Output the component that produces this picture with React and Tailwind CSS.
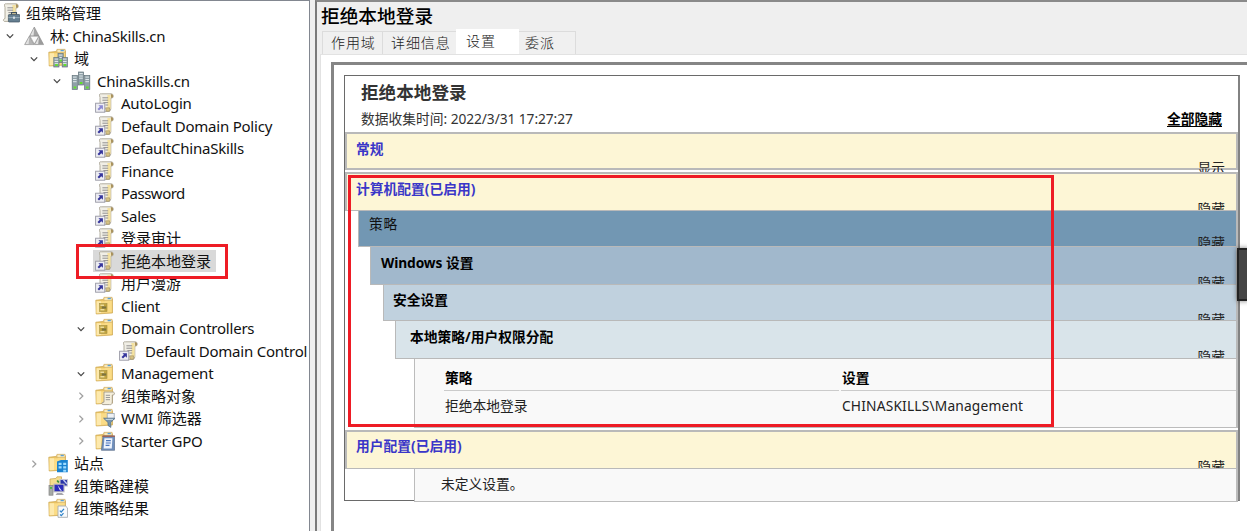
import React from "react";

const LATIN = "font-['Noto_Sans','Noto_Sans_CJK_SC',sans-serif]";

/* ---------- icon parts ---------- */
function FolderShape() {
  return (
    <g>
      <path d="M.8 4.2 L8 3.4 L9.5 1.8 H16.5 L17.5 3 V17 L1.2 18 Z" fill="#e9c263" stroke="#cda64f" strokeWidth=".7" />
      <rect x="9" y="1.2" width="8" height="3.4" fill="#f8e8b8" stroke="#cfa95c" strokeWidth=".6" />
      <rect x="12.6" y="1.8" width="3.2" height="1.4" fill="#5aa0d8" />
      <path d="M1.6 5.2 H9.6 L10.6 4.8 H16.8 V16.2 L1.6 17.3 Z" fill="#fbdc86" />
      <path d="M1.6 5.2 H6 V17 L1.6 17.3 Z" fill="#fde9ad" />
    </g>
  );
}
function ScrollShape() {
  return (
    <g>
      <path d="M4.5 2.2 C4.2 .8 5.6 .7 6.6 .8 H16.5 C18.6 .8 18.7 4.4 17.3 5 H15.8 V15.8 C15.8 18.6 13 18.8 12 18.4 H4.5 C3 18.2 3 15.8 5 15.6 V4.6 Z" fill="#f1efe6" stroke="#aaa595" strokeWidth=".9" />
      <path d="M12.4 2 H15.6 V16 H12.4Z" fill="#f6e3a0" />
      <path d="M15.8 1 C18.8 1 18.8 5 16.2 5Z" fill="#a8905a" />
      <path d="M7.4 4.8 H13.2 M7.4 7.2 H13.2 M8.4 9.6 H13.2 M10.4 12 H13.2" stroke="#929090" strokeWidth="1" />
      <path d="M10.5 14.8 H14.6 V18.2 H11.2Z" fill="#d6c284" stroke="#938358" strokeWidth=".5" />
    </g>
  );
}
function Server({ x, y, h }) {
  return (
    <g>
      <rect x={x} y={y} width="5.2" height={h} fill="#8fa0a8" stroke="#64757d" strokeWidth=".7" />
      <path d={`M${x + 0.8} ${y + 1.6} h3.6 M${x + 0.8} ${y + 4} h3.6 M${x + 0.8} ${y + 6.2} h3.6`} stroke="#e0e8ea" strokeWidth="1" />
      <rect x={x + 1.4} y={y + h - 3} width="2.6" height="2" fill="#62e12c" />
    </g>
  );
}
function Icon({ kind }) {
  return (
    <svg width="20" height="20" viewBox="0 0 20 20" className="shrink-0">
      {kind === "root" && (
        <g>
          <ScrollShape />
          <rect x="8.4" y="11.5" width="11.4" height="7.5" rx=".8" fill="#657f91" stroke="#40515f" strokeWidth=".7" />
          <path d="M11.5 11.5 V9.6 H16.5 V11.5" fill="none" stroke="#40515f" strokeWidth="1.1" />
          <path d="M8.4 14.6 H19.8" stroke="#9eb3c1" strokeWidth=".9" />
          <rect x="13" y="13.6" width="2" height="2.2" fill="#d7dfe4" />
        </g>
      )}
      {kind === "forest" && (
        <g stroke="#8a8a8a" strokeWidth=".6" strokeLinejoin="round">
          <path d="M10.3 1 L15 10 H5.6Z" fill="#a5a5a5" />
          <path d="M5.4 10 L10 18.6 H.6Z" fill="#b5b5b5" />
          <path d="M15 10 L19.6 18.6 H10.4Z" fill="#9c9c9c" />
          <path d="M6 10.2 H14.8 L10.3 18Z" fill="#fafafa" />
          <path d="M10.2 2 L9.6 9.5 L6.4 9.5Z M5.3 11 L4.6 18 H1.6Z M15 11 L14.2 18 H11.2Z" fill="#e2e2e2" stroke="none" />
        </g>
      )}
      {kind === "domains" && (
        <g>
          <FolderShape />
          <Server x={10} y={5.5} h={9} />
          <Server x={5.8} y={9.5} h={9.5} />
          <Server x={14.2} y={9.5} h={9.5} />
        </g>
      )}
      {kind === "domain" && (
        <g>
          <Server x={7.4} y={1} h={13} />
          <Server x={1.2} y={4.5} h={14} />
          <Server x={13.6} y={4.5} h={14} />
        </g>
      )}
      {(kind === "link" || kind === "linkOff") && (
        <g>
          <ScrollShape />
          <rect x=".6" y="10.2" width="9.2" height="9" fill="#eeeef3" stroke="#9797a3" strokeWidth=".9" />
          <path d="M3.4 12.3 H7.9 V16.8 L6.3 15.2 L4 17.6 L2.5 16.1 L4.9 13.8Z" fill={kind === "link" ? "#35359c" : "#8a87d2"} />
        </g>
      )}
      {kind === "ou" && (
        <g>
          <FolderShape />
          <rect x="4.6" y="7.6" width="7.4" height="7.8" fill="#c2a53f" stroke="#a08b3f" strokeWidth=".6" />
          <path d="M5.4 9.2 H9 M5.4 13.8 H9.4" stroke="#fff4c7" strokeWidth="1" />
          <rect x="6.8" y="10.4" width="4.4" height="2.2" fill="#7b7340" />
        </g>
      )}
      {kind === "objects" && (
        <g>
          <FolderShape />
          <path d="M9 6 H18 C20 6 19.8 9 18.2 9 H17.3 V16 C17.3 18.6 15.5 18.9 14.5 18.6 H8 C6.4 18.4 6.6 16.4 8 16.2 H9Z" fill="#f4eedb" stroke="#a0998a" strokeWidth=".9" />
          <path d="M10.8 9.3 H15 M10.8 11.5 H15 M10.8 13.7 H15" stroke="#999" />
        </g>
      )}
      {kind === "wmi" && (
        <g>
          <FolderShape />
          <rect x="12.2" y="5.5" width="7" height="6" fill="#eef1f4" stroke="#9ba6b0" strokeWidth=".8" />
          <path d="M8.6 10.2 H19.8 L15.8 14.5 V19.4 L13 17.5 V14.5Z" fill="#7794ac" stroke="#587389" strokeWidth=".8" />
          <path d="M10.6 11.4 H18" stroke="#c8dae6" />
        </g>
      )}
      {kind === "starter" && (
        <g>
          <FolderShape />
          <path d="M8 5 H19.6 V19.3 H6.4Z" fill="#6f8fbc" stroke="#5d6f8a" strokeWidth=".7" />
          <path d="M9.4 7.2 H17.4 L16.8 17.6 H8.6Z" fill="#edf3fc" />
          <path d="M7.2 5.2 H19.9" stroke="#a3604f" strokeWidth="1.3" />
          <path d="M11 9.7 H15.8 M10.8 12 H15.8 M10.6 14.3 H14.5" stroke="#4a75bb" strokeWidth="1.2" />
        </g>
      )}
      {kind === "sites" && (
        <g>
          <FolderShape />
          <path d="M9 8.5 L13 7 H19.8 V19.3 H9Z" fill="#1a82cf" />
          <path d="M10.6 9.8 h3 v2.3 h-3z M15.2 9.8 h3 v2.3 h-3z M10.6 13.3 h3 v2.3 h-3z M15.2 13.3 h3 v2.3 h-3z M15.2 16.7 h3 v2 h-3z" fill="#9edcff" />
        </g>
      )}
      {kind === "modeling" && (
        <g>
          <path d="M2 3 L8 2.4 L9 .8 H13.5 V10 H2Z" fill="#f5dd8c" stroke="#c6a250" strokeWidth=".7" />
          <rect x="12" y="3.5" width="7.5" height="6.5" fill="#2834a7" stroke="#c6c6d2" strokeWidth="1.1" />
          <path d="M15.5 4 L19 8" stroke="#c3c9f2" strokeWidth="1.4" />
          <rect x="6" y="8.2" width="10" height="7.6" fill="#2a2bbb" stroke="#b8b8bf" strokeWidth="1.1" />
          <path d="M9.5 9 L14 15 L11.8 14.2Z" fill="#e9ecff" />
          <path d="M9 17 H14 L16 19 H7.5Z" fill="#a6a6ac" />
          <rect x="1" y="9.4" width="4" height="9.8" fill="#a6aaa5" stroke="#858585" strokeWidth=".7" />
          <rect x="2" y="11" width="2" height="1.8" fill="#49bd3e" />
          <path d="M9.2 4.5 L10.8 6.5" stroke="#348f3c" strokeWidth="1.8" />
        </g>
      )}
      {kind === "results" && (
        <g>
          <FolderShape />
          <path d="M10 8 H17.5 L19.6 10 V19.3 H10Z" fill="#f8fafc" stroke="#a5aab0" strokeWidth=".9" />
          <path d="M11.8 12.6 L13.2 14 L16 10.8 M12 16.6 L13.3 17.6 L15.5 15.2" fill="none" stroke="#2f83c9" strokeWidth="1.2" />
        </g>
      )}
    </svg>
  );
}

function Chevron({ state }) {
  return (
    <svg width="10" height="10" viewBox="0 0 10 10" className="mt-px mr-[9px] shrink-0" fill="none" strokeWidth="1.3">
      {state === "open" && <path d="M1.8 3.4 L5 6.6 L8.2 3.4" stroke="#484848" />}
      {state === "closed" && <path d="M3.4 1.6 L6.8 5 L3.4 8.4" stroke="#a0a0a0" />}
    </svg>
  );
}

/* ---------- tree ---------- */
const TREE = [
  { level: 0, icon: "root", cjk: "组策略管理" },
  { level: 1, icon: "forest", state: "open", pre: "林", latin: ": ChinaSkills.cn" },
  { level: 2, icon: "domains", state: "open", cjk: "域" },
  { level: 3, icon: "domain", state: "open", latin: "ChinaSkills.cn" },
  { level: 4, icon: "linkOff", latin: "AutoLogin" },
  { level: 4, icon: "link", latin: "Default Domain Policy" },
  { level: 4, icon: "link", latin: "DefaultChinaSkills" },
  { level: 4, icon: "link", latin: "Finance" },
  { level: 4, icon: "link", latin: "Password", tight: true },
  { level: 4, icon: "link", latin: "Sales" },
  { level: 4, icon: "link", cjk: "登录审计" },
  { level: 4, icon: "link", cjk: "拒绝本地登录", selected: true },
  { level: 4, icon: "link", cjk: "用户漫游" },
  { level: 4, icon: "ou", latin: "Client" },
  { level: 4, icon: "ou", state: "open", latin: "Domain Controllers" },
  { level: 5, icon: "link", latin: "Default Domain Control" },
  { level: 4, icon: "ou", state: "open", latin: "Management" },
  { level: 4, icon: "objects", state: "closed", cjk: "组策略对象" },
  { level: 4, icon: "wmi", state: "closed", latin: "WMI ", cjk: "筛选器" },
  { level: 4, icon: "starter", state: "closed", latin: "Starter GPO" },
  { level: 2, icon: "sites", state: "closed", cjk: "站点" },
  { level: 2, icon: "modeling", cjk: "组策略建模" },
  { level: 2, icon: "results", cjk: "组策略结果" },
];
const INDENT = ["-ml-[19px]", "ml-[5px]", "ml-[29px]", "ml-[52px]", "ml-[76px]", "ml-[100px]"];

function TreeRow({ node }) {
  return (
    <div className={`flex h-[22.5px] items-center whitespace-nowrap ${INDENT[node.level]}`}>
      <Chevron state={node.state} />
      <div className={`flex h-[22px] items-center pr-[5px] ${node.selected ? "-ml-[2px] bg-[#d9d9d9] pl-[2px]" : ""}`}>
        <Icon kind={node.icon} />
        <span className="ml-[6px] flex text-[15px] leading-[22px] text-[#111]">
          {node.pre && <span>{node.pre}</span>}
          {node.latin && (
            <span className={`whitespace-pre ${node.tight ? "tracking-[-0.5px]" : "tracking-[-0.22px]"}`}>{node.latin}</span>
          )}
          {node.cjk && <span>{node.cjk}</span>}
        </span>
      </div>
    </div>
  );
}

/* ---------- report ---------- */
function Bar({ className, title, titleClass, toggle, toggleClass }) {
  return (
    <div className={`relative flex border-t border-r-2 border-b border-l border-[#b9b9b9] text-[13.75px] ${className}`}>
      <span className={`leading-[20px] ${titleClass}`}>{title}</span>
      <span className={`absolute right-[11px] overflow-hidden leading-[14px] text-[#222] ${toggleClass}`}>{toggle}</span>
    </div>
  );
}

export default function App() {
  return (
    <div className={`relative flex h-[531px] w-[1247px] overflow-hidden bg-[#efefef] ${LATIN}`}>
      <aside className="h-full w-[310px] shrink-0 overflow-hidden border-t border-r border-t-[#828790] border-r-[#828790] bg-white pt-px">
        {TREE.map((node, i) => (
          <TreeRow key={i} node={node} />
        ))}
      </aside>
      <div className="w-[5px] shrink-0 bg-[#f0f0f0]" />

      <main className="flex min-w-0 grow flex-col border-t-2 border-l-2 border-t-[#8a8a8a] border-l-[#7b7b7b]">
        <h1 className="h-[27px] pl-[4px] text-[18.7px] leading-[27px] font-medium text-black">拒绝本地登录</h1>
        <div className="flex h-[25px] items-end pl-[5px] text-[14px] leading-[22px] font-light tracking-[0.9px] text-[#222]">
          <div className="h-[23px] w-[60px] border-t border-l border-[#dcdcdc] bg-[#f0f0f0] pl-[8px]">作用域</div>
          <div className="h-[23px] w-[74px] border-t border-l border-[#dcdcdc] bg-[#f0f0f0] pl-[8px]">详细信息</div>
          <div className="h-[25px] w-[63px] bg-white pt-px pl-[10px]">设置</div>
          <div className="h-[23px] w-[57px] border-t border-r border-[#dcdcdc] bg-[#f0f0f0] pl-[6px]">委派</div>
        </div>

        <div className="ml-[3px] grow border-t border-l border-[#e2e2e2] bg-white pt-[7px] pl-[10px]">
          <div className="h-full border-t-[3px] border-l-[3px] border-[#858585] pt-[10px] pl-[10px]">
            <div className="h-[426px] w-[896px] border border-r-2 border-[#6a6a6a] border-r-[#828282]">
              <header className="flex h-[56px] justify-between pr-[16px] pl-[16px]">
                <div className="text-[#333]">
                  <div className="h-[32px] text-[17.6px] leading-[33px] font-bold">拒绝本地登录</div>
                  <div className="flex text-[13.75px] leading-[21px]">
                    <span>数据收集时间</span>
                    <span className="whitespace-pre tracking-[-0.07px]">: 2022/3/31 17:27:27</span>
                  </div>
                </div>
                <div className="mt-[35px] h-[16px] border-b border-black text-[13.75px] leading-[16px] font-bold text-black">全部隐藏</div>
              </header>

              <Bar
                className="h-[38px] border-t-2 border-b-2 border-l-2 bg-[#fdf6d6]"
                title="常规"
                titleClass="pl-[9px] pt-[5px] font-bold text-[#3a36c8]"
                toggle="显示"
                toggleClass="top-[27px] h-[11px]"
              />
              <Bar
                className="mt-[2px] h-[39px] border-t-2 border-l-2 bg-[#fdf6d6]"
                title="计算机配置(已启用)"
                titleClass="pl-[9px] pt-[5px] font-bold text-[#3a36c8]"
                toggle="隐藏"
                toggleClass="top-[28px] h-[8px]"
              />
              <Bar
                className="-mt-px ml-[13px] h-[37px] bg-[#7297b3]"
                title="策略"
                titleClass="pl-[10px] pt-[3px] tracking-[0.8px] text-[#111]"
                toggle="隐藏"
                toggleClass="top-[25px] h-[10px]"
              />
              <Bar
                className="-mt-px ml-[25px] h-[39px] bg-[#a1b8cc]"
                title={<><span className="tracking-[-0.1px]">Windows</span> 设置</>}
                titleClass="pl-[10px] pt-[6px] font-bold text-black"
                toggle="隐藏"
                toggleClass="top-[29px] h-[8px]"
              />
              <Bar
                className="-mt-px ml-[38px] h-[37px] bg-[#c0d1de]"
                title="安全设置"
                titleClass="pl-[9px] pt-[5px] font-bold text-black"
                toggle="隐藏"
                toggleClass="top-[28px] h-[7px]"
              />
              <Bar
                className="-mt-px ml-[50px] h-[39px] bg-[#d9e4ea]"
                title="本地策略/用户权限分配"
                titleClass="pl-[14px] pt-[6px] font-bold text-black"
                toggle="隐藏"
                toggleClass="top-[29px] h-[8px]"
              />
              <div className="-mt-px ml-[69px] flex h-[70px] gap-[2px] border border-r-2 border-[#bcbcbc] bg-[#f9f9f9] pt-[9px] pl-[29px] text-[13.75px] leading-[20px] text-black">
                <div className="w-[395px]">
                  <div className="h-[23px] border-b border-[#cbcbcb] pl-px font-bold">策略</div>
                  <div className="pt-[5px] pl-px text-[#222]">拒绝本地登录</div>
                </div>
                <div className="grow">
                  <div className="h-[23px] border-b border-[#cbcbcb] pl-px font-bold">设置</div>
                  <div className="pt-[5px] pl-px tracking-[0.18px] text-[#222]">CHINASKILLS\Management</div>
                </div>
              </div>
              <Bar
                className="mt-[2px] h-[39px] border-t-2 border-l-2 bg-[#fdf6d6]"
                title="用户配置(已启用)"
                titleClass="pl-[9px] pt-[4px] font-bold text-[#3a36c8]"
                toggle="隐藏"
                toggleClass="top-[28px] h-[8px]"
              />
              <div className="-mt-px ml-[69px] h-[34px] border border-r-2 border-[#bcbcbc] bg-[#f9f9f9] pl-[26px] text-[13.75px] leading-[30px] text-[#222]">
                未定义设置。
              </div>
            </div>
          </div>
        </div>
      </main>

      <div className="absolute top-[244px] left-[76px] h-[35px] w-[152px] border-3 border-[#ee1c25]" />
      <div className="absolute top-[175px] left-[348px] h-[252px] w-[706px] border-3 border-[#ee1c25]" />
      <div className="absolute top-[248px] left-[1237px] h-[53px] w-[12px] border-2 border-[#222] bg-[#454545] shadow-[0_0_5px_rgba(0,0,0,0.5)]" />
    </div>
  );
}
